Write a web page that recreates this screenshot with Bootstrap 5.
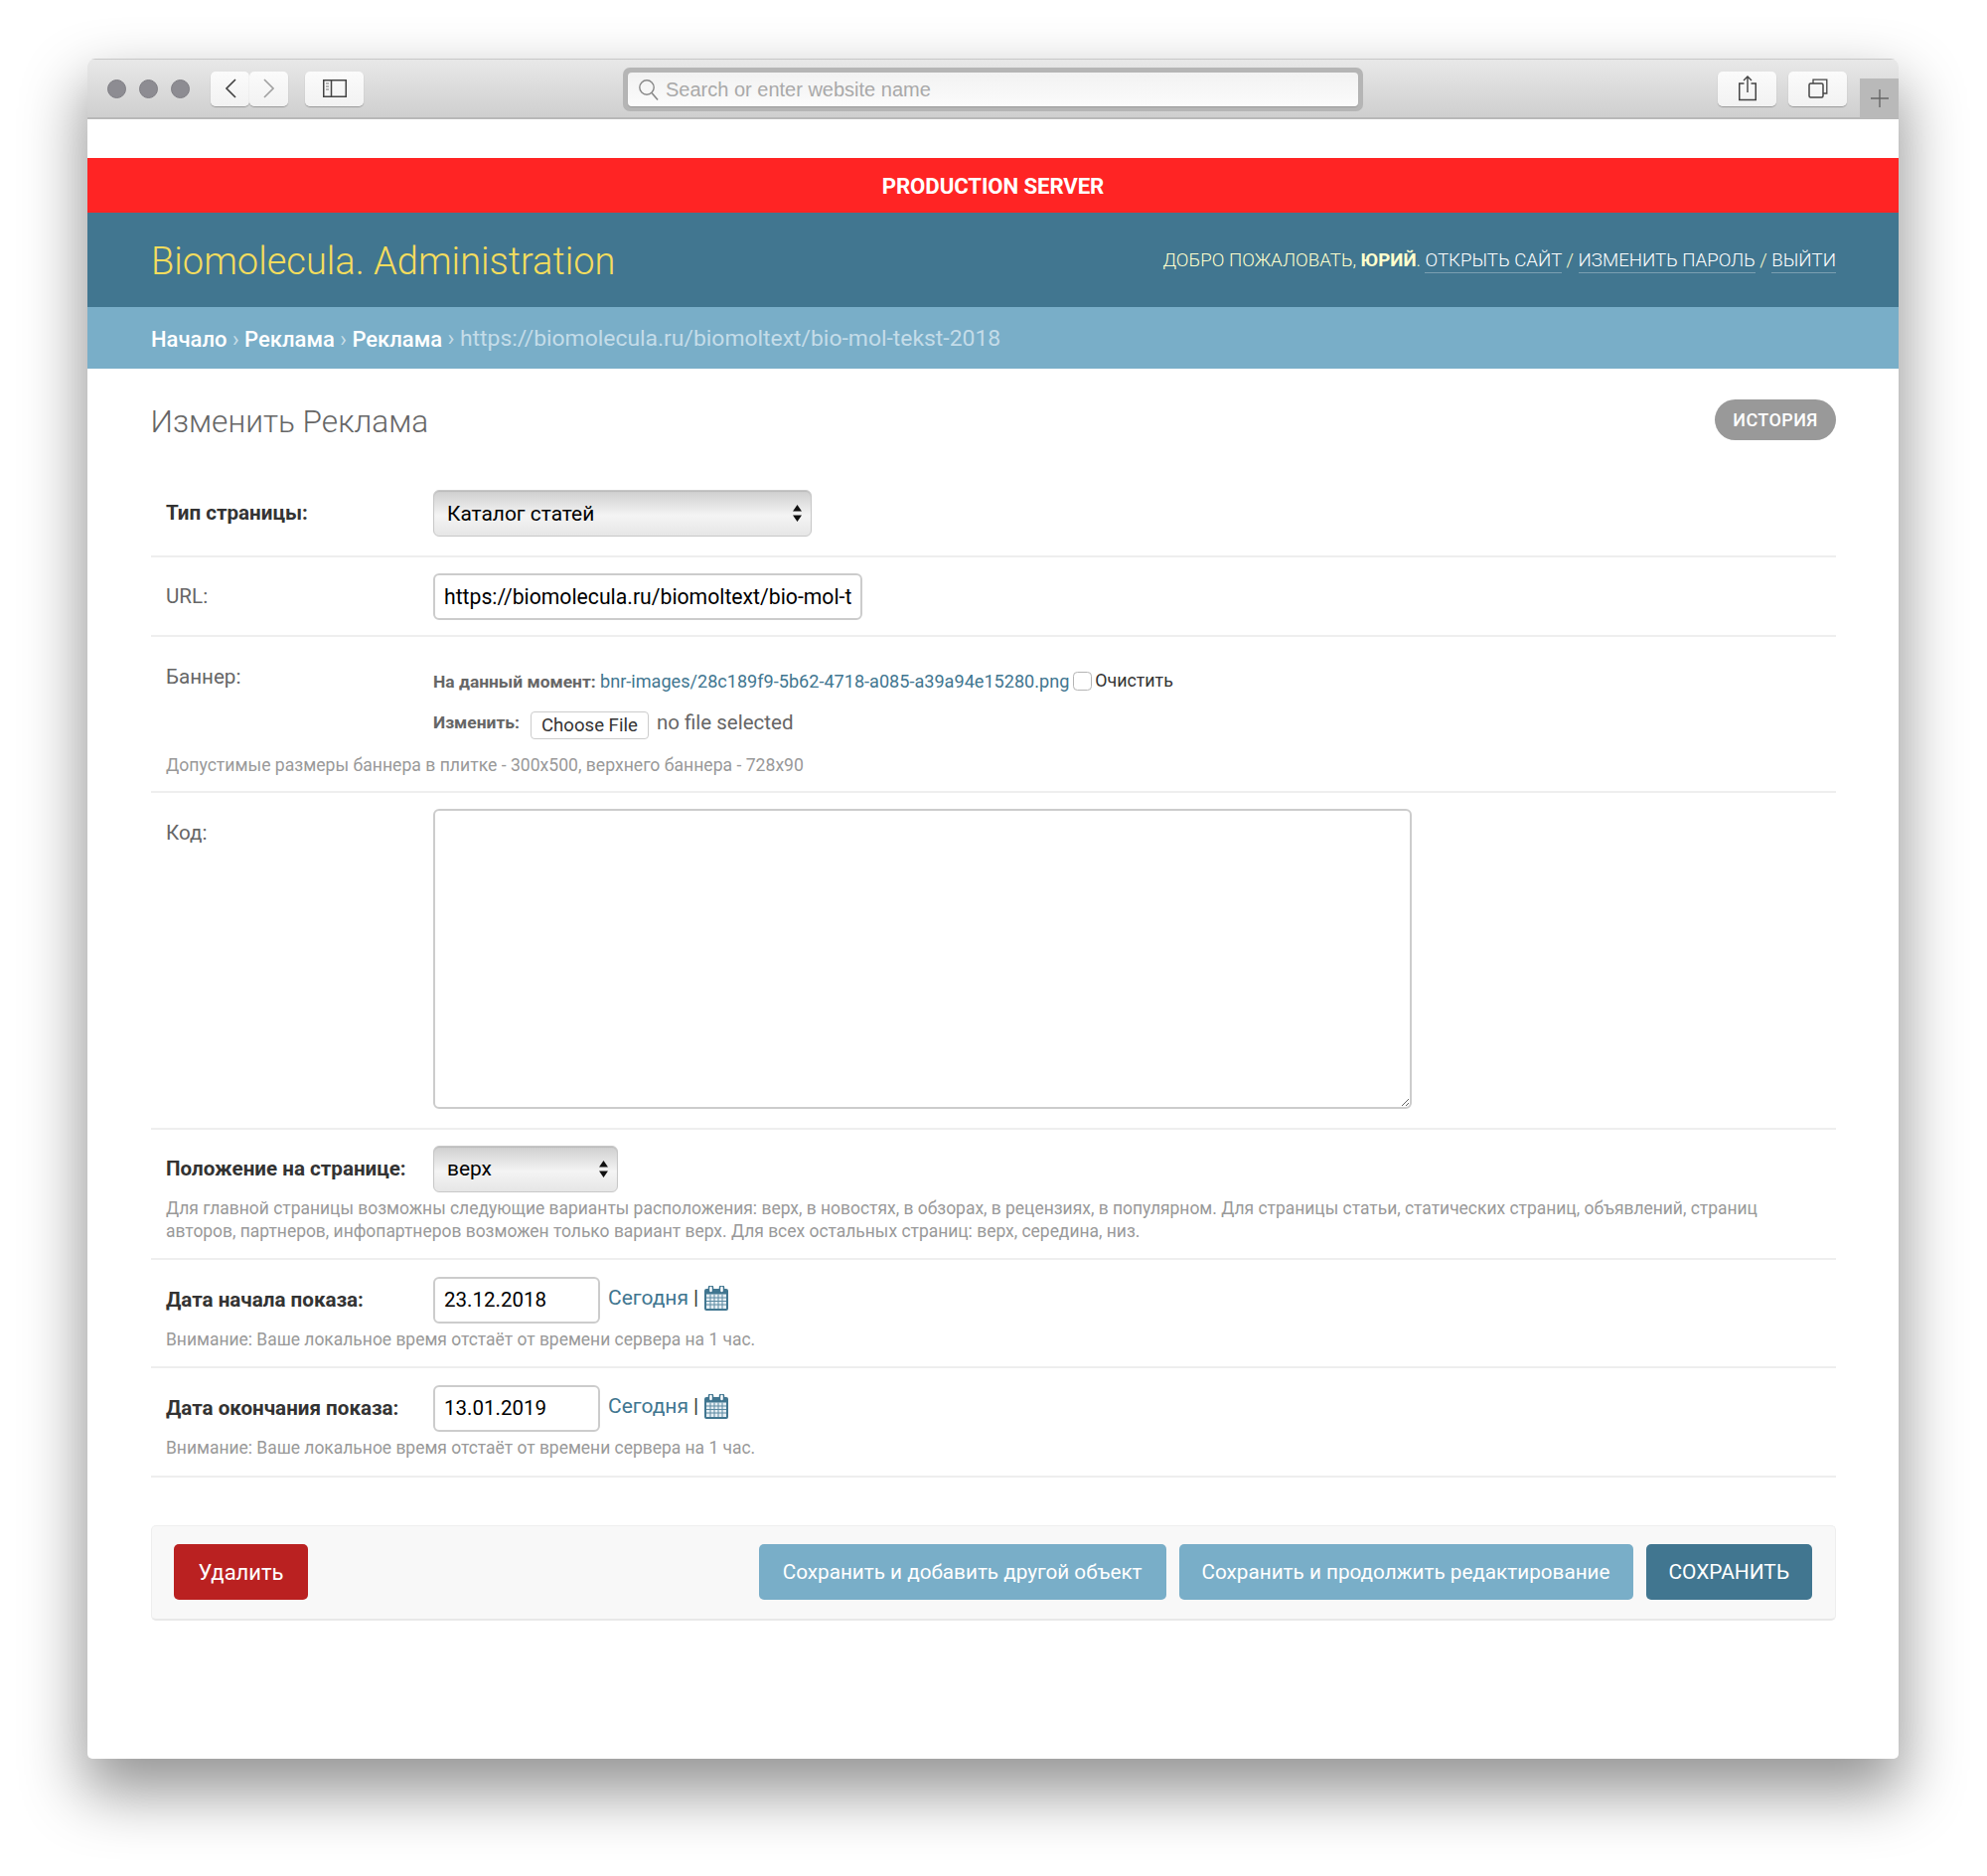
<!DOCTYPE html>
<html lang="ru">
<head>
<meta charset="utf-8">
<title>Изменить Реклама</title>
<link href="https://cdn.jsdelivr.net/npm/bootstrap@5.3.0/dist/css/bootstrap.min.css" rel="stylesheet">
<style>
html,body{height:1888px;background:#fff;overflow:hidden}
body{font-family:Roboto,"Liberation Sans",sans-serif;color:#333;font-size:20px;padding:59px 89px 0 88px}
.win{height:1711px;background:#fff;border-radius:8px 8px 5px 5px;box-shadow:0 30px 62px 4px rgba(0,0,0,.42);overflow:hidden}
.chrome{height:61px;background:linear-gradient(#e8e8e8,#cfcfcf);border-top:1px solid #c8c8c8;border-bottom:2px solid #b8b8b8;position:relative}
.lights{width:124px;padding-left:20px;gap:13px}
.lt{width:19px;height:19px;border-radius:50%;background:#8d8c92;border:1px solid #7f7e84}
.tb{flex:none;height:35px;border-radius:5px;background:linear-gradient(#fbfbfb,#f2f2f2);box-shadow:0 1px 1px rgba(0,0,0,.28);display:flex;align-items:center;justify-content:center}
.tb-nav{width:39px}
.tb-side{width:59px;margin-left:17px}
.tb-act{width:59px}
.urlwrap{position:absolute;left:539px;top:8px;width:745px;height:44px;background:#b5b5b5;border-radius:7px;padding:5px}
.urlin{height:34px;background:linear-gradient(#f2f2f2,#fbfbfb);border-radius:4px;box-shadow:0 1px 1px #999;font:20px "Liberation Sans",sans-serif;color:#a9a9a9;gap:7px;padding-left:10px}
.urlin span{padding-top:1px}
.plus{position:absolute;right:0;top:19px;width:39px;height:40px;background:#b9b9b9;display:flex;align-items:center;justify-content:center}
.gapw{height:39px}
.prod{height:55px;background:#ff2424;color:#fff;font-weight:700;font-size:22.2px;letter-spacing:-.1px;padding-top:2px}
.hdr{height:95px;background:#417690;padding:2px 63px 0 64px}
.brand{font-size:38px;font-weight:300;color:#f5dd5d;margin:0;line-height:1}
.tools{font-size:18.7px;font-weight:300;color:#ffc;text-transform:uppercase}
.tools b{font-weight:700}
.tools a{color:#fff;text-decoration:none;border-bottom:1px solid rgba(255,255,255,.3);padding-bottom:1px}
.crumbs{--bs-breadcrumb-divider:'›';--bs-breadcrumb-item-padding-x:5.5px;--bs-breadcrumb-margin-bottom:0;--bs-breadcrumb-divider-color:rgba(255,255,255,.6);--bs-breadcrumb-item-active-color:#c4dce8;height:62px;background:#79aec8;padding:2px 64px 0;font-size:22px;align-items:center}
.crumbs a{color:#fff;text-decoration:none;font-weight:500;font-size:22px}
.crumbs .active{font-size:22.9px}
.main{padding:0 63px 0 63.5px}
.headline{height:107px;padding-top:31px}
.headline h1{font-size:31.6px;font-weight:300;color:#666;margin:4px 0 0;line-height:1.2}
.hist{width:122px;height:41px;border-radius:21px;background:#999;color:#fff;font-size:18px;font-weight:500;line-height:41px;padding:0;border:0;text-transform:uppercase;letter-spacing:.4px}
.fr{padding:17px 0 19px 15.5px;border-bottom:2px solid #eee}
.lab{width:269px;flex:none;font-size:20.6px;color:#666;margin:0}
.req{font-weight:700;color:#333}
.sel{font:20.9px Roboto,sans-serif;color:#000;height:47px;padding:0 13px;border:1px solid #c8c8c8;border-radius:6px;appearance:none;background:linear-gradient(#cfcfcf,#f4f4f4 55%,#e6e6e6);box-shadow:inset 0 1px 1px rgba(0,0,0,.1)}
.selbox{position:relative;display:inline-block}
.arr{position:absolute;right:9px;top:15px;pointer-events:none}
.inp{font-size:20.5px;color:#000;height:47px;padding:0 9px;border:2px solid #ccc;border-radius:6px;background:#fff}
.inp-url{font-size:21.2px}
.inp:focus{box-shadow:none;border-color:#ccc}
.sm{font-size:17.45px;color:#999;margin:0;line-height:23px}
.sm-wide{font-size:17.6px}
.cur{font-size:17.4px;color:#666}
.cur b{font-weight:700}
.cur a{font-size:18.1px}
.cur a,.today{color:#417690;text-decoration:none}
.chk{width:19px;height:19px;margin:0 3px 0 4px;border:1px solid #b4b4b4;border-radius:4px;flex:none}
.chlab{color:#333;font-size:17.8px}
.fbtn{font-size:18.6px;color:#333;background:#fff;border:1px solid #ccc;border-radius:4px;height:28px;width:119px;line-height:26px;text-align:center;margin:0 8px 0 11px;padding:0;position:relative;top:2px}
.nofile{font-size:20.5px;color:#666;font-weight:400}
.txt{display:block;width:985px;height:302px;border:2px solid #ccc;border-radius:6px;resize:both;background:#fff;margin-left:0}
.today{font-size:21px}
.bar{color:#333;font-size:21px;padding:0 6px 0 5px}
.subrow{margin-top:48px;height:96px;background:#f8f8f8;border:1px solid #eee;border-bottom:2px solid #e8e8e8;border-radius:5px;padding:0 23px 0 22.5px}
.sb{height:56px;border:0;border-radius:5px;color:#fff;font-size:20.7px;font-weight:400;padding:0 23px;white-space:nowrap}
.sb-del{background:#ba2121;width:135px;padding:0;font-size:22px}
.sb-del:hover{background:#ba2121;color:#fff}
.sb-lt{background:#79aec8}
.sb-lt:hover{background:#79aec8;color:#fff}
.sb-first{padding:0 24px}
.sb-dk{background:#417690;text-transform:uppercase;font-size:20.9px}
.sb-dk:hover{background:#417690;color:#fff}
</style>
</head>
<body>
<div class="win">
  <div class="chrome d-flex align-items-center">
    <div class="lights d-flex align-items-center"><span class="lt"></span><span class="lt"></span><span class="lt"></span></div>
    <div class="d-flex gap-0" style="column-gap:2px">
      <span class="tb tb-nav"><svg width="14" height="22" viewBox="0 0 14 22"><path d="M12 2 3 11l9 9" fill="none" stroke="#444" stroke-width="1.7"/></svg></span>
      <span class="tb tb-nav"><svg width="14" height="22" viewBox="0 0 14 22"><path d="M2 2l9 9-9 9" fill="none" stroke="#a2a2a2" stroke-width="1.7"/></svg></span>
    </div>
    <span class="tb tb-side"><svg width="24" height="18" viewBox="0 0 24 18"><rect x=".75" y=".75" width="22.5" height="16.5" fill="none" stroke="#444" stroke-width="1.5"/><path d="M8.5 1v16" stroke="#444" stroke-width="1.5"/><path d="M3 4h3M3 7h3M3 10h3" stroke="#777" stroke-width="1.2"/></svg></span>
    <div class="urlwrap">
      <div class="urlin d-flex align-items-center"><svg width="21" height="23" viewBox="0 0 21 23"><circle cx="9" cy="9" r="7.2" fill="none" stroke="#888" stroke-width="1.4"/><path d="M14 14.5 20 21.5" stroke="#888" stroke-width="1.6"/></svg><span>Search or enter website name</span></div>
    </div>
    <div class="d-flex ms-auto" style="column-gap:12px;margin-right:52px">
      <span class="tb tb-act"><svg width="20" height="26" viewBox="0 0 20 26"><path d="M6.5 8H1.75v16.5h16.5V8H13.5" fill="none" stroke="#444" stroke-width="1.5"/><path d="M10 1v16M6 5l4-4 4 4" fill="none" stroke="#444" stroke-width="1.4"/></svg></span>
      <span class="tb tb-act"><svg width="20" height="20" viewBox="0 0 20 20"><rect x="1" y="5" width="14" height="14" rx="1.5" fill="none" stroke="#444" stroke-width="1.5"/><path d="M5 5V1.2h13.8V15H15" fill="none" stroke="#444" stroke-width="1.3"/></svg></span>
    </div>
    <span class="plus"><svg width="18" height="18" viewBox="0 0 18 18"><path d="M0 9h18M9 0v18" stroke="#666" stroke-width="1.4"/></svg></span>
  </div>
  <div class="gapw"></div>
  <div class="prod d-flex align-items-center justify-content-center">PRODUCTION SERVER</div>
  <header class="hdr d-flex align-items-center justify-content-between">
    <h2 class="brand">Biomolecula. Administration</h2>
    <div class="tools">Добро пожаловать, <b>Юрий</b>. <a href="#">Открыть сайт</a> / <a href="#">Изменить пароль</a> / <a href="#">Выйти</a></div>
  </header>
  <nav aria-label="breadcrumb"><ol class="breadcrumb crumbs">
    <li class="breadcrumb-item"><a href="#">Начало</a></li>
    <li class="breadcrumb-item"><a href="#">Реклама</a></li>
    <li class="breadcrumb-item"><a href="#">Реклама</a></li>
    <li class="breadcrumb-item active" aria-current="page">https://biomolecula.ru/biomoltext/bio-mol-tekst-2018</li>
  </ol></nav>
  <main class="main">
    <div class="headline d-flex justify-content-between align-items-start">
      <h1>Изменить Реклама</h1>
      <button class="btn hist" type="button">История</button>
    </div>
    <form>
      <div class="fr d-flex align-items-center" style="padding-top:15px;padding-bottom:19px">
        <label class="lab req">Тип страницы:</label>
        <span class="selbox"><select class="sel" style="width:381px"><option>Каталог статей</option></select><svg class="arr" width="11" height="17" viewBox="0 0 11 17"><path d="M5.500 0 10 6.500H1zM5.500 17 1 10.500h9z" fill="#111"/></svg></span>
      </div>
      <div class="fr d-flex align-items-center" style="padding-top:15.5px;padding-bottom:15.5px">
        <label class="lab">URL:</label>
        <input class="form-control inp inp-url" style="width:432px" value="https://biomolecula.ru/biomoltext/bio-mol-tekst-2018">
      </div>
      <div class="fr" style="padding-top:25px;padding-bottom:14px">
        <div class="d-flex">
          <label class="lab">Баннер:</label>
          <div>
            <div class="cur d-flex align-items-center" style="margin-top:6px;white-space:nowrap"><b>На данный момент:</b>&nbsp;<a href="#">bnr-images/28c189f9-5b62-4718-a085-a39a94e15280.png</a><input type="checkbox" class="chk form-check-input mt-0"><span class="chlab">Очистить</span></div>
            <div class="cur d-flex align-items-center" style="margin-top:13px"><b>Изменить:</b><span class="fbtn">Choose File</span><span class="nofile">no file selected</span></div>
          </div>
        </div>
        <p class="sm sm-wide" style="margin-top:16px">Допустимые размеры баннера в плитке - 300x500, верхнего баннера - 728x90</p>
      </div>
      <div class="fr d-flex" style="padding-top:16px;padding-bottom:19px">
        <label class="lab" style="padding-top:9px">Код:</label>
        <textarea class="txt"></textarea>
      </div>
      <div class="fr" style="padding-top:16px;padding-bottom:15px">
        <div class="d-flex align-items-center">
          <label class="lab req">Положение на странице:</label>
          <span class="selbox"><select class="sel" style="width:186px"><option>верх</option></select><svg class="arr" width="11" height="17" viewBox="0 0 11 17"><path d="M5.500 0 10 6.500H1zM5.500 17 1 10.500h9z" fill="#111"/></svg></span>
        </div>
        <p class="sm" style="margin-top:5px;width:1640px">Для главной страницы возможны следующие варианты расположения: верх, в новостях, в обзорах, в рецензиях, в популярном. Для страницы статьи, статических страниц, объявлений, страниц авторов, партнеров, инфопартнеров возможен только вариант верх. Для всех остальных страниц: верх, середина, низ.</p>
      </div>
      <div class="fr" style="padding-top:17px;padding-bottom:15px">
        <div class="d-flex align-items-center">
          <label class="lab req">Дата начала показа:</label>
          <input class="form-control inp" style="width:168px" value="23.12.2018">
          <div class="d-flex align-items-center" style="margin:-4px 0 0 8px"><a class="today" href="#">Сегодня</a><span class="bar">|</span><svg width="24" height="25" viewBox="0 0 24 25"><use href="#cal"/></svg></div>
        </div>
        <p class="sm" style="margin-top:5px">Внимание: Ваше локальное время отстаёт от времени сервера на 1 час.</p>
      </div>
      <div class="fr" style="padding-top:17px;padding-bottom:16px">
        <div class="d-flex align-items-center">
          <label class="lab req">Дата окончания показа:</label>
          <input class="form-control inp" style="width:168px" value="13.01.2019">
          <div class="d-flex align-items-center" style="margin:-4px 0 0 8px"><a class="today" href="#">Сегодня</a><span class="bar">|</span><svg width="24" height="25" viewBox="0 0 24 25"><use href="#cal"/></svg></div>
        </div>
        <p class="sm" style="margin-top:5px">Внимание: Ваше локальное время отстаёт от времени сервера на 1 час.</p>
      </div>
      <div class="subrow d-flex align-items-center">
        <button class="btn sb sb-del" type="button">Удалить</button>
        <div class="ms-auto d-flex" style="column-gap:13px">
          <button class="btn sb sb-lt sb-first" type="button">Сохранить и добавить другой объект</button>
          <button class="btn sb sb-lt" type="button">Сохранить и продолжить редактирование</button>
          <button class="btn sb sb-dk" type="button">Сохранить</button>
        </div>
      </div>
    </form>
  </main>
</div>
<svg width="0" height="0" class="d-block"><defs><g id="cal"><rect x="0" y="3" width="24" height="22" rx="2" fill="#417690"/><rect x="2" y="8.500" width="20" height="14.500" fill="#e6eff4"/><path d="M2 12h20M2 15.500h20M2 19h20M6 8.500V23M10 8.500V23M14 8.500V23M18 8.500V23" stroke="#5c8aa2" stroke-width="1"/><rect x="4.500" y="0" width="4" height="7" rx="2" fill="#fff" stroke="#417690" stroke-width="1.500"/><rect x="15.500" y="0" width="4" height="7" rx="2" fill="#fff" stroke="#417690" stroke-width="1.500"/></g></defs></svg>
</body>
</html>
